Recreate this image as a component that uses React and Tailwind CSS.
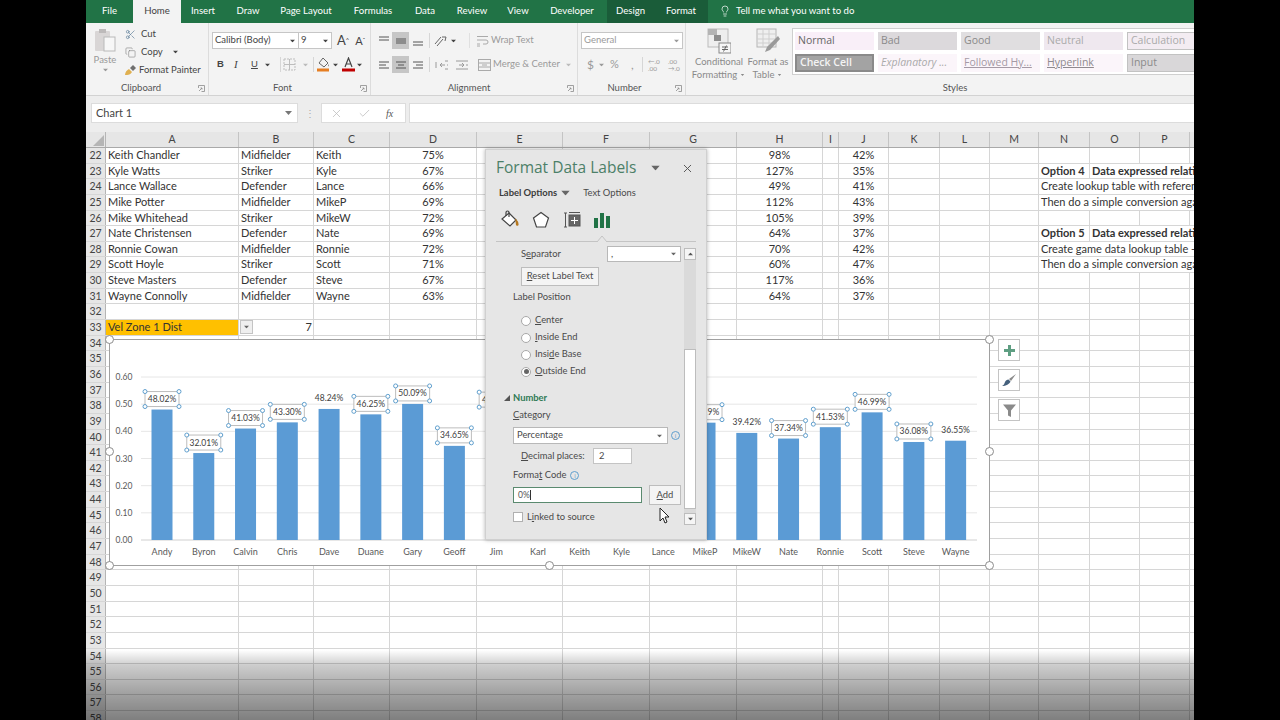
import React from 'react';
import { Scissors, Copy, Lightbulb, X, Check } from 'lucide-react';

const tabs = [
  { label: 'File', cls: 'w-[47px] text-white' },
  { label: 'Home', cls: 'w-[48px] bg-[#f3f3f3] text-[#3f3f3f]' },
  { label: 'Insert', cls: 'w-[44px] text-white' },
  { label: 'Draw', cls: 'w-[46px] text-white' },
  { label: 'Page Layout', cls: 'w-[70px] text-white' },
  { label: 'Formulas', cls: 'w-[64px] text-white' },
  { label: 'Data', cls: 'w-[40px] text-white' },
  { label: 'Review', cls: 'w-[54px] text-white' },
  { label: 'View', cls: 'w-[38px] text-white' },
  { label: 'Developer', cls: 'w-[70px] text-white' },
  { label: 'Design', cls: 'w-[47px] bg-[#1a5c39] text-white' },
  { label: 'Format', cls: 'w-[54px] bg-[#1a5c39] text-white' },
];

const colWidths = [133, 75, 76, 87, 86, 87, 87, 86, 16, 50, 51, 50, 49, 51, 50, 50, 60];
const colNames = ['A', 'B', 'C', 'D', 'E', 'F', 'G', 'H', 'I', 'J', 'K', 'L', 'M', 'N', 'O', 'P', ''];

const players = {
  22: ['Keith Chandler', 'Midfielder', 'Keith', '75%', '98%', '42%'],
  23: ['Kyle Watts', 'Striker', 'Kyle', '67%', '127%', '35%'],
  24: ['Lance Wallace', 'Defender', 'Lance', '66%', '49%', '41%'],
  25: ['Mike Potter', 'Midfielder', 'MikeP', '69%', '112%', '43%'],
  26: ['Mike Whitehead', 'Striker', 'MikeW', '72%', '105%', '39%'],
  27: ['Nate Christensen', 'Defender', 'Nate', '69%', '64%', '37%'],
  28: ['Ronnie Cowan', 'Midfielder', 'Ronnie', '72%', '70%', '42%'],
  29: ['Scott Hoyle', 'Striker', 'Scott', '71%', '60%', '47%'],
  30: ['Steve Masters', 'Defender', 'Steve', '67%', '117%', '36%'],
  31: ['Wayne Connolly', 'Midfielder', 'Wayne', '63%', '64%', '37%'],
};

const notes = {
  23: { n: 'Option 4', o: 'Data expressed relative to' },
  24: { wide: 'Create lookup table with reference' },
  25: { wide: 'Then do a simple conversion against' },
  27: { n: 'Option 5', o: 'Data expressed relative to' },
  28: { wide: 'Create game data lookup table - then' },
  29: { wide: 'Then do a simple conversion against' },
};

// the last flag says whether the label shows at all: Karl to Lance sit behind the pane
const bars = [
  ['Andy', 48.02, true, true], ['Byron', 32.01, true, true], ['Calvin', 41.03, true, true], ['Chris', 43.3, true, true],
  ['Dave', 48.24, false, true], ['Duane', 46.25, true, true], ['Gary', 50.09, true, true], ['Geoff', 34.65, true, true],
  ['Jim', 47.8, true, true], ['Karl', 44.1, false, false], ['Keith', 42.2, false, false], ['Kyle', 35.1, false, false],
  ['Lance', 41.2, false, false], ['MikeP', 43.19, true, true], ['MikeW', 39.42, false, true], ['Nate', 37.34, true, true],
  ['Ronnie', 41.53, true, true], ['Scott', 46.99, true, true], ['Steve', 36.08, true, true], ['Wayne', 36.55, false, true],
];

const yFor = (v) => 540 - (v * 163) / 60;

const Caret = ({ className = '' }) => (
  <svg width="7" height="4" viewBox="0 0 7 4" className={className}><path d="M0 0h7L3.500 4z" fill="currentColor" /></svg>
);

const Launcher = ({ className = '' }) => (
  <svg width="7" height="7" viewBox="0 0 7 7" className={className} fill="none" stroke="#8a8a8a" strokeWidth="0.8">
    <path d="M.5 3V.5H6.500V6.500H3.500" /><path d="M1 6l3-3M2.500 3H4v1.500" />
  </svg>
);

const AlignLines = ({ rows }) => (
  <svg width="12" height="12" viewBox="0 0 12 12" stroke="#555" strokeWidth="1">
    {rows.map(([y, x1, x2]) => <line key={y} x1={x1} x2={x2} y1={y} y2={y} />)}
  </svg>
);

const AlignBtn = ({ rows, on }) => (
  <div className={`w-[17px] h-[17px] flex items-center justify-center ${on ? 'bg-[#c6c6c6]' : ''}`}><AlignLines rows={rows} /></div>
);

const GroupLabel = ({ text, launcher, cls = '' }) => (
  <div className="h-[14px] relative flex items-center justify-center text-[9.5px] text-[#555]">
    <span className={cls}>{text}</span>
    {launcher && <Launcher className="absolute right-[3px] top-[4px]" />}
  </div>
);

const StyleCell = ({ children, cls }) => (
  <div className={`w-[79px] h-[18px] shrink-0 flex items-center pl-[3px] text-[10.5px] whitespace-nowrap font-['Open_Sans',sans-serif] ${cls}`}>{children}</div>
);

function Ribbon() {
  return (
    <div className="h-[73px] bg-[#f3f3f3] flex border-b border-[#d2d2d2] text-[#444]">
      {/* Clipboard */}
      <div className="w-[123px] shrink-0 flex flex-col border-r border-[#dcdcdc]">
        <div className="h-[59px] flex">
          <div className="w-[38px] flex flex-col items-center pt-[5px] text-[#999]">
            <svg width="22" height="24" viewBox="0 0 22 24">
              <rect x="1" y="3" width="15" height="20" rx="1" fill="#d9d6d6" />
              <rect x="5" y="1" width="7" height="4" fill="#bdbaba" />
              <rect x="10" y="9" width="11" height="14" fill="#f7f7f7" stroke="#b9b9b9" />
            </svg>
            <span className="text-[9.5px] leading-[12px] mt-[2px]">Paste</span>
            <Caret className="mt-[2px] scale-75" />
          </div>
          <div className="flex flex-col pt-[2px] text-[9.5px]">
            <div className="h-[18px] flex items-center gap-[4px]"><Scissors size={11} strokeWidth={1.3} className="text-[#4b6f8e] ml-[1px]" /><span className="ml-[1px]">Cut</span></div>
            <div className="h-[18px] flex items-center gap-[4px]"><Copy size={11} strokeWidth={1.2} className="text-[#777] ml-[1px]" /><span className="ml-[1px]">Copy</span><Caret className="ml-[5px] scale-75" /></div>
            <div className="h-[18px] flex items-center gap-[2px]">
              <svg width="13" height="12" viewBox="0 0 13 12"><path d="M1 11c0-3 2-5 4-6l3 3c-1 2-3 3-5 3z" fill="#e0b050" /><path d="M6 4l3-3 3 3-3 3z" fill="#6f6f6f" /></svg>
              <span className="whitespace-nowrap">Format Painter</span>
            </div>
          </div>
        </div>
        <GroupLabel text="Clipboard" launcher cls="pr-[12px]" />
      </div>

      {/* Font */}
      <div className="w-[162px] shrink-0 flex flex-col border-r border-[#dcdcdc]">
        <div className="h-[59px] pl-[3px] pt-[9px]">
          <div className="flex items-center h-[17px]">
            <div className="w-[87px] h-full bg-white border border-[#c6c6c6] flex items-center justify-between px-[2px] text-[9.5px]">Calibri (Body)<Caret className="scale-75" /></div>
            <div className="w-[33px] h-full bg-white border border-l-0 border-[#c6c6c6] flex items-center justify-between px-[2px] text-[9.5px]">9<Caret className="scale-75" /></div>
            <span className="ml-[5px] text-[13px] leading-none">A<sup className="text-[6px]">^</sup></span>
            <span className="ml-[6px] text-[11px] leading-none">A<sup className="text-[6px]">ˇ</sup></span>
          </div>
          <div className="flex items-center h-[17px] mt-[7px] text-[10.5px] font-['Liberation_Serif',serif]">
            <span className="w-[5px]" />
            <b className="w-[17px] font-['Liberation_Sans',sans-serif] text-[9.5px]">B</b>
            <i className="w-[17px] text-[11px]">I</i>
            <u className="w-[13px] font-['Liberation_Sans',sans-serif] text-[9.5px]">U</u>
            <Caret className="scale-75 mr-[9px]" />
            <div className="w-px h-[15px] bg-[#d6d6d6] mr-[2px]" />
            <svg width="13" height="13" viewBox="0 0 13 13" fill="none" stroke="#bdbdbd" className="mr-[6px]"><rect x="1" y="1" width="11" height="11" strokeDasharray="2 1" /><path d="M6.500 1v11M1 6.500h11" /></svg>
            <Caret className="scale-75 text-[#bbb] mr-[4px]" />
            <div className="w-px h-[15px] bg-[#d6d6d6] mr-[2px]" />
            <svg width="15" height="15" viewBox="0 0 15 15" className="mr-[1px]"><path d="M7 1l5 5-4 4-5-4z" fill="none" stroke="#666" /><path d="M12 7c1 1 1.500 2 .5 2.500z" fill="#666" /><rect x="1" y="11.500" width="12" height="3" fill="#e67e22" /></svg>
            <Caret className="scale-75 mr-[3px]" />
            <svg width="13" height="15" viewBox="0 0 13 15" className="mr-[1px]"><path d="M3 10l3.500-9 3.500 9M4.300 7h4.400" fill="none" stroke="#444" strokeWidth="1.200" /><rect x="0" y="11.500" width="13" height="3" fill="#c00000" /></svg>
            <Caret className="scale-75" />
          </div>
        </div>
        <GroupLabel text="Font" launcher cls="pr-[14px]" />
      </div>

      {/* Alignment */}
      <div className="w-[207px] shrink-0 flex flex-col border-r border-[#dcdcdc]">
        <div className="h-[59px] pt-[9px] pl-[4px] text-[9.5px]">
          <div className="flex items-center h-[17px]">
            <AlignBtn rows={[[2, 1, 11], [5, 1, 11]]} />
            <AlignBtn on rows={[[4, 1, 11], [6, 1, 11], [8, 1, 11]]} />
            <AlignBtn rows={[[7, 1, 11], [10, 1, 11]]} />
            <div className="w-px h-[15px] bg-[#d6d6d6] ml-[3px] mr-[4px]" />
            <svg width="14" height="12" viewBox="0 0 14 12" fill="none" stroke="#666" className="mr-[2px]"><path d="M1 9l6-7M3 11l6-7M8 2l4 0-1 4" /></svg>
            <Caret className="scale-75" />
            <div className="w-px h-[15px] bg-[#e0e0e0] ml-[12px] mr-[6px]" />
            <svg width="13" height="12" viewBox="0 0 13 12" fill="none" stroke="#aaa" className="mr-[2px]"><path d="M1 1.500h11M1 5h9a2 2 0 010 4H7M1 9h3M1 11h3" /></svg>
            <span className="text-[#9a9a9a] whitespace-nowrap">Wrap Text</span>
          </div>
          <div className="flex items-center h-[17px] mt-[7px]">
            <AlignBtn rows={[[3, 1, 11], [6, 1, 8], [9, 1, 11]]} />
            <AlignBtn on rows={[[3, 1, 11], [6, 3, 9], [9, 1, 11]]} />
            <AlignBtn rows={[[3, 1, 11], [6, 4, 11], [9, 1, 11]]} />
            <div className="w-px h-[15px] bg-[#d6d6d6] ml-[3px] mr-[5px]" />
            <svg width="36" height="12" viewBox="0 0 36 12" fill="none" stroke="#9a9a9a" className="mr-[7px]"><path d="M5 6h5M5 6l2-2M5 6l2 2M1 3V9M10 2h3M12 6h1M10 10h3" /><path d="M24 6h5M29 6l-2-2M29 6l-2 2M21 2h12M31 6h2M21 10h12" /></svg>
            <svg width="13" height="12" viewBox="0 0 13 12" fill="none" stroke="#aaa" className="mr-[2px]"><rect x=".5" y=".5" width="12" height="11" /><path d="M.5 4h12M.5 8h12M4 6h5" /></svg>
            <span className="text-[#9a9a9a] whitespace-nowrap">Merge &amp; Center</span>
            <Caret className="scale-75 text-[#bbb] ml-[5px]" />
          </div>
        </div>
        <GroupLabel text="Alignment" launcher cls="pr-[10px]" />
      </div>

      {/* Number */}
      <div className="w-[108px] shrink-0 flex flex-col border-r border-[#dcdcdc]">
        <div className="h-[59px] pt-[9px] pl-[3px]">
          <div className="w-[102px] h-[17px] bg-white border border-[#c6c6c6] flex items-center justify-between px-[2px] text-[9.5px] text-[#9a9a9a]">General<Caret className="scale-75" /></div>
          <div className="flex items-center h-[17px] mt-[7px] text-[#9a9a9a] text-[12px]">
            <span className="ml-[6px] w-[8px]">$</span>
            <Caret className="scale-75 ml-[3px]" />
            <span className="ml-[5px] w-[12px] text-[11px]">%</span>
            <span className="ml-[9px] w-[5px]">,</span>
            <div className="w-px h-[15px] bg-[#d6d6d6] ml-[6px]" />
            <span className="ml-[5px] w-[18px] text-[6.5px] leading-[7px] whitespace-pre">{'←.0\n.00'}</span>
            <span className="ml-[2px] text-[6.5px] leading-[7px] whitespace-pre">{'.00\n→.0'}</span>
          </div>
        </div>
        <GroupLabel text="Number" launcher cls="pr-[14px]" />
      </div>

      {/* Styles */}
      <div className="w-[538px] shrink-0 flex flex-col">
        <div className="h-[59px] flex">
          <div className="w-[66px] shrink-0 flex flex-col items-center pt-[5px] text-[9.5px] leading-[13px] text-[#8a8a8a]">
            <svg width="24" height="26" viewBox="0 0 24 26" className="mb-[1px]">
              <rect x="1" y="1" width="20" height="18" fill="#eee" stroke="#bbb" />
              <rect x="1" y="1" width="9" height="6" fill="#b4b4b4" /><rect x="7" y="7" width="7" height="6" fill="#8d8d8d" />
              <rect x="12" y="15" width="12" height="10" fill="#f7f7f7" stroke="#888" />
              <path d="M15 19h6M15 21.500h6M19.500 17.500l-3 6" stroke="#666" fill="none" />
            </svg>
            <span>Conditional</span>
            <span className="flex items-center gap-[2px]">Formatting<Caret className="scale-50" /></span>
          </div>
          <div className="w-[32px] shrink-0 flex flex-col items-center pt-[5px] text-[9.5px] leading-[13px] text-[#8a8a8a]">
            <svg width="24" height="26" viewBox="0 0 24 26" className="mb-[1px] shrink-0">
              <rect x="1" y="1" width="19" height="18" fill="#efefef" stroke="#b5b5b5" />
              <path d="M1 6h19M1 11h19M1 15h19M7 1v18M13 1v18" stroke="#cfcfcf" />
              <path d="M22 8L11 19l-2 5 5-2L24 11z" fill="#9a9a9a" />
            </svg>
            <span className="whitespace-nowrap">Format as</span>
            <span className="flex items-center gap-[2px]">Table<Caret className="scale-50" /></span>
          </div>
          <div className="ml-[8px] mt-[5px] h-[47px] flex-1 bg-white border border-[#cfcfcf] flex flex-col gap-[4px] pl-[2px] pt-[3px]">
            <div className="flex gap-[4px]">
              <StyleCell cls="bg-[#f9eff8] text-[#666]">Normal</StyleCell>
              <StyleCell cls="bg-[#dcd9dc] text-[#8a8a8a]">Bad</StyleCell>
              <StyleCell cls="bg-[#e0dee0] text-[#8a8a8a]">Good</StyleCell>
              <StyleCell cls="bg-[#efe8ef] text-[#aaa]">Neutral</StyleCell>
              <StyleCell cls="bg-[#f3ecf2] text-[#aaa] border border-[#c2c2c2]">Calculation</StyleCell>
            </div>
            <div className="flex gap-[4px]">
              <StyleCell cls="bg-[#a3a3a3] text-[#f4f4f4] border-2 border-[#8a8a8a] font-semibold">Check Cell</StyleCell>
              <StyleCell cls="bg-[#fbf5fa] text-[#aaa] italic">Explanatory ...</StyleCell>
              <StyleCell cls="bg-[#fbf5fa] text-[#a59aa5] underline">Followed Hy...</StyleCell>
              <StyleCell cls="bg-[#fbf5fa] text-[#8f8a8f] underline">Hyperlink</StyleCell>
              <StyleCell cls="bg-[#d9d7d9] text-[#8a8a8a] border border-[#c2c2c2]">Input</StyleCell>
            </div>
          </div>
        </div>
        <GroupLabel text="Styles" />
      </div>
    </div>
  );
}

function FormulaBar() {
  return (
    <div className="h-[36px] bg-[#ededed] flex items-start pt-[7px] pl-[5px]">
      <div className="w-[207px] h-[20px] bg-white border border-[#dcdcdc] flex items-center justify-between pl-[4px] pr-[5px] text-[11px] text-[#444]">
        Chart 1<Caret className="text-[#777]" />
      </div>
      <div className="w-[23px] h-[20px] flex items-center justify-center text-[#aaa] text-[10px]">⋮</div>
      <div className="w-[85px] h-[20px] bg-white border border-[#dcdcdc] flex items-center text-[#bbb]">
        <X size={13} strokeWidth={1.4} className="ml-[8px]" />
        <Check size={13} strokeWidth={1.4} className="ml-[15px]" />
        <i className="ml-[15px] text-[10px] text-[#555] font-['Liberation_Serif',serif]">fx</i>
      </div>
      <div className="flex-1 ml-[3px] h-[20px] bg-white border-y border-l border-[#dcdcdc]" />
    </div>
  );
}

function HeaderRow() {
  return (
    <div className="flex h-[16px] bg-[#e6e6e6] border-b border-[#a9a9a9] text-[10.5px] text-[#444] leading-[15px]">
      <div className="w-[20px] shrink-0 border-r border-[#b5b5b5] relative overflow-hidden">
        <svg width="11" height="11" viewBox="0 0 11 11" className="absolute right-[1px] bottom-[1px]"><path d="M11 0v11H0z" fill="#b5b5b5" /></svg>
      </div>
      {colWidths.map((w, i) => (
        <div key={i} className="shrink-0 text-center border-r border-[#c4c4c4]" style={{ width: w }}>{colNames[i]}</div>
      ))}
    </div>
  );
}

function Cell({ w, children, cls = '' }) {
  return (
    <div className={`shrink-0 h-full border-r border-[#d6d6d6] px-[2px] whitespace-nowrap overflow-hidden ${cls}`} style={{ width: w }}>
      {children}
    </div>
  );
}

function SheetRow({ n }) {
  const p = players[n];
  const note = notes[n];
  const left = colWidths.slice(0, 13);
  const cells = left.map((w, i) => {
    let text = null;
    let cls = '';
    if (p) {
      const idx = [0, 1, 2, 3, 7, 9].indexOf(i);
      if (idx >= 0) text = p[idx];
      if (i === 3 || i === 7 || i === 9) cls = 'text-center';
    }
    if (n === 33 && i === 0) {
      text = 'Vel Zone 1 Dist';
      cls = 'bg-[#ffc000]';
    }
    if (n === 33 && i === 1) {
      return (
        <Cell key={i} w={w} cls="flex items-center justify-between !pr-[1px] !pl-[1px]">
          <span className="w-[13px] h-[14px] bg-[#efefef] border border-[#c4c4c4] flex items-center justify-center text-[#666]"><Caret className="scale-75" /></span>
          <span>7</span>
        </Cell>
      );
    }
    return <Cell key={i} w={w} cls={cls}>{text}</Cell>;
  });
  let right;
  if (note && note.wide) {
    right = <Cell w={211} cls="!border-r-0">{note.wide}</Cell>;
  } else if (note) {
    right = (
      <>
        <Cell w={51} cls="font-bold">{note.n}</Cell>
        <Cell w={160} cls="font-bold !border-r-0">{note.o}</Cell>
      </>
    );
  } else {
    right = colWidths.slice(13).map((w, i) => <Cell key={i} w={w} />);
  }
  return (
    <div className="flex h-[15.65px] leading-[14px] border-b border-[#d6d6d6] text-[11px] text-[#333] bg-white">
      <div className="w-[20px] shrink-0 bg-[#e6e6e6] border-r border-[#b5b5b5] text-center text-[10.5px] text-[#444]">{n}</div>
      {cells}
      {right}
    </div>
  );
}

function Handle({ cls }) {
  return <div className={`absolute w-[9px] h-[9px] rounded-full bg-white border border-[#8c8c8c] ${cls}`} />;
}

function Chart() {
  const ticks = [0, 10, 20, 30, 40, 50, 60];
  return (
    <div className="absolute left-[24px] top-[340px] w-[879px] h-[225px] bg-white outline outline-[1.5px] outline-[#a0a0a0]">
      <svg width="879" height="225" viewBox="110 340 879 225" className="block">
        {ticks.map((t) => (
          <g key={t}>
            <line x1="141" x2="977" y1={yFor(t)} y2={yFor(t)} stroke={t === 0 ? '#d0d0d0' : '#e6e6e6'} />
            <text x="124" y={yFor(t) + 3} textAnchor="middle" fontSize="8.5" fill="#595959">{(t / 100).toFixed(2)}</text>
          </g>
        ))}
        {bars.map(([name, v, sel, shown], i) => {
          const cx = 162 + i * 41.77;
          const top = yFor(v);
          return (
            <g key={name}>
              <rect x={cx - 10.5} y={top} width="21" height={540 - top} fill="#5b9bd5" />
              <text x={cx} y="555" textAnchor="middle" fontSize="9" fill="#595959">{name}</text>
              {sel && <rect x={cx - 17} y={top - 18} width="34" height="15" fill="#fff" stroke="#bdbdbd" />}
              {shown && <text x={cx} y={top - 7.5} textAnchor="middle" fontSize="8.5" fill="#404040">{v.toFixed(2)}%</text>}
              {sel && [[-17, -18], [17, -18], [-17, -3], [17, -3]].map(([dx, dy]) => (
                <circle key={`${dx}${dy}`} cx={cx + dx} cy={top + dy} r="2" fill="#fff" stroke="#5f9fce" strokeWidth="1" />
              ))}
            </g>
          );
        })}
      </svg>
      <Handle cls="left-[-5px] top-[-5px]" />
      <Handle cls="right-[-5px] top-[-5px]" />
      <Handle cls="left-[-5px] top-[107px]" />
      <Handle cls="right-[-5px] top-[107px]" />
      <Handle cls="left-[-5px] bottom-[-5px]" />
      <Handle cls="left-[435px] bottom-[-5px]" />
      <Handle cls="right-[-5px] bottom-[-5px]" />
    </div>
  );
}

function ChartButtons() {
  const box = 'w-[22px] h-[22px] bg-white border border-[#c4c4c4] flex items-center justify-center';
  return (
    <div className="absolute left-[912px] top-[339px] flex flex-col gap-[8px]">
      <div className={box}>
        <svg width="13" height="13" viewBox="0 0 13 13"><path d="M5 1h3v4h4v3H8v4H5V8H1V5h4z" fill="#5e9e82" /></svg>
      </div>
      <div className={box}>
        <svg width="16" height="15" viewBox="0 0 16 15"><path d="M15 1L8 6l2 2z" fill="#8a8a8a" /><path d="M7.500 6.500l2 2C8.500 11 5 13 1 13c2-1 2.500-2.500 3-4 .5-1.500 2-2.500 3.500-2.500z" fill="#44607c" /></svg>
      </div>
      <div className={box}>
        <svg width="15" height="15" viewBox="0 0 15 15"><path d="M1 1.500h13L9 7.500V14l-3-1.500v-5z" fill="#8a8a8a" /></svg>
      </div>
    </div>
  );
}

const Radio = ({ label, on }) => (
  <div className="flex items-center h-[17px] pl-[8px]">
    <span className="w-[10px] h-[10px] rounded-full bg-white border border-[#a8a8a8] flex items-center justify-center">
      {on && <span className="w-[5px] h-[5px] rounded-full bg-[#666]" />}
    </span>
    <span className="ml-[4px]">{label}</span>
  </div>
);

const InfoDot = ({ className = '' }) => (
  <span className={`w-[9px] h-[9px] rounded-full border border-[#5f9fce] text-[#5f9fce] text-[6px] leading-[7px] text-center ${className}`}>i</span>
);

function Pane() {
  return (
    <div className="absolute left-[399px] top-[149px] w-[222px] h-[391px] bg-[#e6e6e6] border border-[#d0d0d0] shadow-[0_0_4px_rgba(0,0,0,0.3)] text-[9.4px] text-[#4a4a4a] flex flex-col">
      <div className="h-[34px] flex items-center pl-[10px] pt-[2px] shrink-0 font-['Open_Sans',sans-serif]">
        <span className="text-[15.5px] text-[#4c8068] whitespace-nowrap w-[156px]">Format Data Labels</span>
        <Caret className="text-[#666] scale-125" />
        <X size={13} strokeWidth={1.8} className="ml-[22px] text-[#555]" />
      </div>
      <div className="h-[20px] flex items-center pl-[13px] pb-[2px] shrink-0">
        <b className="font-bold text-[#3c3c3c] whitespace-nowrap">Label Options</b>
        <Caret className="ml-[5px] text-[#666] scale-125" />
        <span className="ml-[14px] whitespace-nowrap">Text Options</span>
      </div>
      <div className="h-[38px] flex items-center shrink-0 relative border-b border-[#c4c4c4] mx-[10px] pl-[4px] pb-[6px]">
        <svg width="20" height="20" viewBox="0 0 20 20" fill="none" stroke="#444" strokeWidth="1.200"><path d="M9 3l7 7-6 6-8-7z" fill="#fff" /><path d="M6 6V2.500a1.500 1.500 0 013 0V7" /><path d="M16 10c1.500 1.500 2 3 2 4.500 0 1-1.500 1-1.500 0z" fill="#b5771e" stroke="#b5771e" /></svg>
        <svg width="18" height="18" viewBox="0 0 18 18" fill="none" stroke="#444" strokeWidth="1.200" className="ml-[12px]"><path d="M9 1.500L16.500 7l-3 9h-9l-3-9z" fill="#fff" /></svg>
        <svg width="18" height="18" viewBox="0 0 18 18" fill="none" stroke="#555" className="ml-[13px]"><path d="M1 2h3M2.500 2v14M1 16h3" /><rect x="6" y="4" width="11" height="11" fill="#666" /><path d="M6 1.500h11" /><path d="M8 9.500h7M11.500 6v7" stroke="#fff" /></svg>
        <svg width="18" height="18" viewBox="0 0 18 18" className="ml-[12px]"><path d="M1 7h4v10H1zM7 2h4v15H7zM13 5h4v12h-4z" fill="#217346" /></svg>
        <svg width="10" height="6" viewBox="0 0 10 6" className="absolute left-[101px] bottom-[-1px]"><path d="M0 6L5 0l5 6" fill="#e6e6e6" stroke="#c4c4c4" /></svg>
      </div>
      <div className="flex-1 flex min-h-0">
        <div className="w-[198px] shrink-0 pl-[27px] pt-[4px]">
          <div className="flex items-center h-[16px]">
            <span className="ml-[8px] w-[86px]">S<u>e</u>parator</span>
            <div className="w-[74px] h-[16px] bg-white border border-[#b8b8b8] flex items-center justify-between px-[3px]">,<Caret className="scale-75 text-[#666]" /></div>
          </div>
          <div className="ml-[8px] mt-[5px] w-[78px] h-[19px] bg-[#f4f4f4] border border-[#bdbdbd] flex items-center justify-center whitespace-nowrap"><span><u>R</u>eset Label Text</span></div>
          <div className="mt-[4px] h-[14px] leading-[14px]">Label Position</div>
          <div className="mt-[8px]">
            <Radio label={<><u>C</u>enter</>} />
            <Radio label={<><u>I</u>nside End</>} />
            <Radio label={<>Insi<u>d</u>e Base</>} />
            <Radio on label={<><u>O</u>utside End</>} />
          </div>
          <div className="relative mt-[11px] h-[14px] leading-[14px] font-bold text-[#2f7a55]">
            <svg width="6" height="6" viewBox="0 0 6 6" className="absolute left-[-9px] top-[4px]"><path d="M6 0v6H0z" fill="#555" /></svg>
            Number
          </div>
          <div className="mt-[3px] h-[14px] leading-[14px]"><u>C</u>ategory</div>
          <div className="flex items-center mt-[5px]">
            <div className="w-[155px] h-[17px] bg-white border border-[#b8b8b8] flex items-center justify-between pl-[3px] pr-[4px]">Percentage<Caret className="scale-75 text-[#666]" /></div>
            <InfoDot className="ml-[3px]" />
          </div>
          <div className="flex items-center mt-[4px] h-[16px]">
            <span className="ml-[8px] w-[72px] whitespace-nowrap"><u>D</u>ecimal places:</span>
            <div className="w-[39px] h-[16px] bg-white border border-[#c4c4c4] pl-[5px] leading-[14px]">2</div>
          </div>
          <div className="flex items-center mt-[3px] h-[16px]">
            <span>Forma<u>t</u> Code</span>
            <InfoDot className="ml-[4px]" />
          </div>
          <div className="flex items-center mt-[2px] h-[20px]">
            <div className="w-[129px] h-[16px] bg-white border border-[#5a8a6f] pl-[4px] text-[8.5px] leading-[14px] text-[#555] flex items-center">0%<span className="w-px h-[10px] bg-[#333]" /></div>
            <div className="ml-[7px] w-[32px] h-[20px] bg-[#f4f4f4] border border-[#bdbdbd] flex items-center justify-center"><span><u>A</u>dd</span></div>
          </div>
          <div className="flex items-center mt-[5px] h-[14px]">
            <span className="w-[10px] h-[10px] bg-white border border-[#b0b0b0]" />
            <span className="ml-[4px]">L<u>i</u>nked to source</span>
          </div>
        </div>
        <div className="mt-[6px] w-[12px] flex flex-col">
          <div className="h-[12px] bg-[#f5f5f5] border border-[#bdbdbd] flex items-center justify-center text-[#555]"><Caret className="rotate-180 scale-75" /></div>
          <div className="h-[89px] bg-[#dadada]" />
          <div className="h-[160px] bg-white border border-[#bdbdbd]" />
          <div className="h-[4px] bg-[#dadada]" />
          <div className="h-[12px] bg-[#f5f5f5] border border-[#bdbdbd] flex items-center justify-center text-[#555]"><Caret className="scale-75" /></div>
        </div>
      </div>
    </div>
  );
}

export default function App() {
  const rows = Array.from({ length: 37 }, (_, i) => 22 + i);
  return (
    <div className="w-[1280px] h-[720px] bg-black flex justify-center overflow-hidden font-['Lato','Open_Sans',sans-serif]">
      <div className="w-[1108px] h-full relative overflow-hidden bg-white flex flex-col">
        <div className="h-[23px] bg-[#217346] flex items-center shrink-0 text-[9.6px]">
          {tabs.map((t) => (
            <div key={t.label} className={`h-full flex items-center justify-center ${t.cls}`}>{t.label}</div>
          ))}
          <div className="flex items-center ml-[11px] text-white gap-[5px]">
            <Lightbulb size={12} strokeWidth={1.4} />
            Tell me what you want to do
          </div>
        </div>
        <div className="shrink-0"><Ribbon /></div>
        <div className="shrink-0"><FormulaBar /></div>
        <HeaderRow />
        <div>{rows.map((n) => <SheetRow key={n} n={n} />)}</div>

        <Chart />
        <ChartButtons />
        <Pane />
        <svg width="12" height="17" viewBox="0 0 12 17" className="absolute left-[573px] top-[507px]"><path d="M1 1v13l3-3 2 5 2-1-2-5h4z" fill="#fff" stroke="#222" /></svg>
        <div className="absolute left-0 right-0 bottom-0 h-[70px] pointer-events-none bg-[linear-gradient(to_bottom,rgba(0,0,0,0),rgba(0,0,0,0.2)_22%,rgba(0,0,0,0.36)_60%,rgba(0,0,0,0.5))]" />
      </div>
    </div>
  );
}
